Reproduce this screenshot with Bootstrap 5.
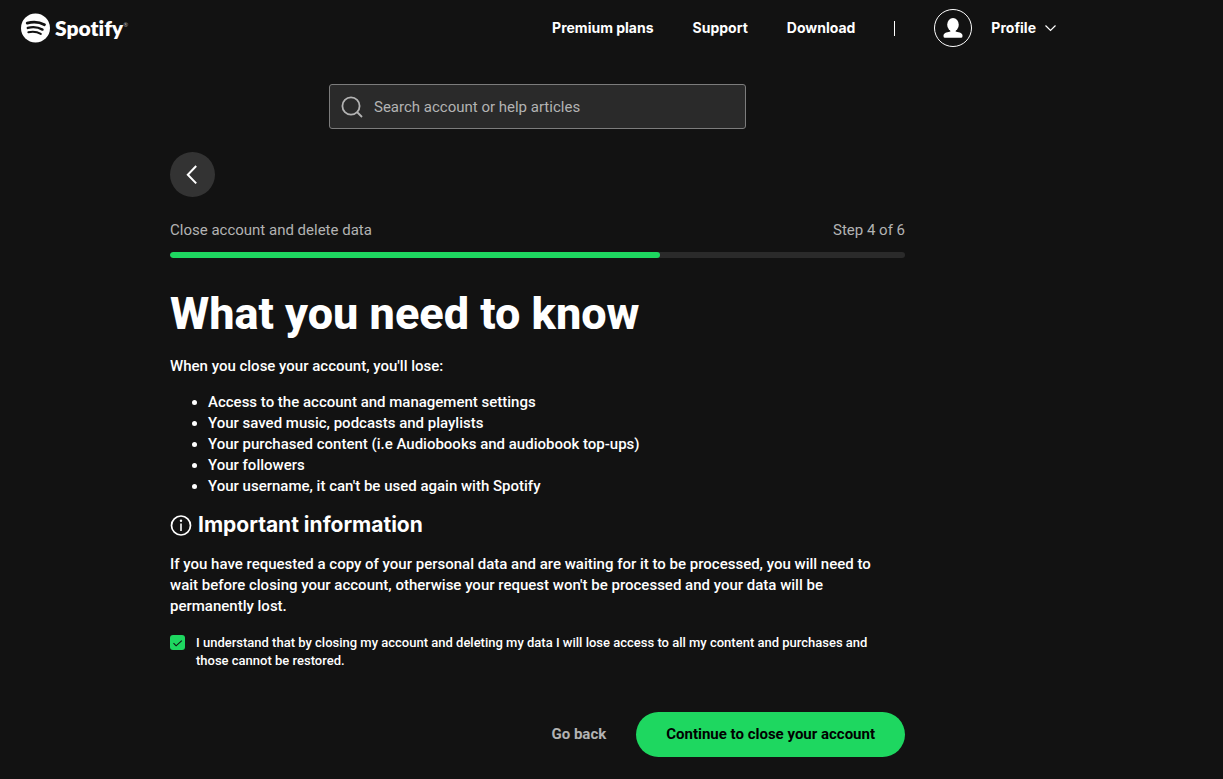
<!DOCTYPE html>
<html lang="en">
<head>
<meta charset="utf-8">
<meta name="viewport" content="width=device-width, initial-scale=1">
<title>Close account - Spotify</title>
<link href="https://cdn.jsdelivr.net/npm/bootstrap@5.3.0/dist/css/bootstrap.min.css" rel="stylesheet">
<style>
  :root { --green: #1ed760; --muted: #b3b3b3; }
  body { background: #121212; color: #fff; font-family: Roboto, "Liberation Sans", sans-serif; font-size: 15px; line-height: 21px; font-weight: 500; }
  .page-shell { padding-right: 148px; }
  .site-header { height: 56px; padding-left: 20px; padding-right: 19px; }
  .brand { color: #fff; font-family: Lato, sans-serif; font-variant-ligatures: none; font-size: 21px; line-height: 28px; font-weight: 800; text-decoration: none; gap: 5px; }
  .brand sup { font-size: 6px; color: var(--muted); top: -9px; font-weight: 400; }
  .top-link { color: #fff; font-family: Inter, sans-serif; font-weight: 700; font-size: 14px; line-height: 20px; text-decoration: none; }
  .top-link:hover { color: #fff; }
  .top-nav { gap: 39px; }
  .divider { width: 1px; height: 15px; background: #fff; }
  .avatar { width: 38px; height: 38px; border: 1px solid #fff; }
  .profile-btn { gap: 19px; }
  .search-box { width: 417px; max-width: 100%; height: 45px; margin-top: 28px; background: #2a2a2a; border: 1px solid #7c7c7c; border-radius: 3px; padding: 0 11px; gap: 11px; }
  .search-box input { background: transparent; border: 0; outline: 0; color: #fff; font-weight: 400; padding: 2px 0 0; }
  .search-box input::placeholder { color: var(--muted); opacity: 1; }
  .content { max-width: 735px; }
  .back-btn { width: 45px; height: 45px; background: #333; border: 0; color: #fff; margin-top: 23px; }
  .step-row { color: var(--muted); font-weight: 400; margin-top: 23px; }
  .progress { --bs-progress-height: 6px; --bs-progress-bg: #2a2a2a; --bs-progress-bar-bg: var(--green); --bs-progress-border-radius: 3px; margin-top: 11px; }
  .progress-bar { border-radius: 3px; }
  h1 { font-size: 45px; line-height: 54px; font-weight: 800; margin: 29px 0 15px; }
  .lose-list { padding-left: 38px; margin: 15px 0 14px; }
  h2 { font-family: Inter, sans-serif; font-size: 21px; line-height: 28px; font-weight: 700; gap: 6px; margin: 0 0 15px; }
  .notice { padding-right: 16px; margin: 0; }
  .consent { font-size: 13px; line-height: 18px; gap: 11px; margin-top: 17px; padding-right: 16px; }
  .consent input { width: 15px; height: 15px; appearance: none; border-radius: 3px; border: 1px solid #7c7c7c; margin-top: 1px; }
  .consent input:checked { border: 0; background: var(--green) url("data:image/svg+xml,%3Csvg xmlns='http://www.w3.org/2000/svg' viewBox='0 0 15 15'%3E%3Cpath d='M3.5 8.2l2.600 2.600 5.700-5.200' fill='none' stroke='%23121212' stroke-width='1.100'/%3E%3C/svg%3E"); }
  .actions { margin-top: 42px; padding-bottom: 22px; gap: 30px; }
  .actions button { font-weight: 700; border: 0; }
  .go-back { background: none; color: var(--muted); padding: 0; }
  .continue { background: var(--green); color: #000; height: 45px; padding: 0 30px; }
</style>
</head>
<body>
<div class="page-shell">
  <header class="site-header d-flex align-items-center justify-content-between">
    <a class="brand d-flex align-items-center" href="#">
      <svg width="30" height="30" viewBox="0 0 30 30" aria-hidden="true">
        <circle cx="15.500" cy="15" r="14.500" fill="#fff"/>
        <g fill="none" stroke="#121212" stroke-linecap="round">
          <path d="M7.200 10.100c5.800-1.700 12.500-1 17.300 1.600" stroke-width="2.800"/>
          <path d="M7.800 14.900c5.100-1.400 10.500-.7 14.700 1.700" stroke-width="2.400"/>
          <path d="M8.300 19.300c4.400-1 8.900-.5 12.500 1.600" stroke-width="1.900"/>
        </g>
      </svg>
      <span>Spotify<sup>®</sup></span>
    </a>
    <nav class="top-nav d-flex align-items-center">
      <a class="top-link" href="#">Premium plans</a>
      <a class="top-link" href="#">Support</a>
      <a class="top-link" href="#">Download</a>
      <span class="divider"></span>
      <button class="profile-btn top-link btn p-0 border-0 d-flex align-items-center" type="button">
        <span class="avatar rounded-circle d-flex align-items-center justify-content-center">
          <svg width="20" height="20" viewBox="0 0 20 20" fill="#fff" aria-hidden="true"><ellipse cx="10" cy="6.700" rx="5.800" ry="6.700"/><path d="M7.500 11h5v2.200c2 1.200 7 1 7 4.300v.8q0 1.500-1.500 1.500H2q-1.500 0-1.500-1.500v-.8c0-3.300 5-3.100 7-4.300z"/></svg>
        </span>
        <span class="d-flex align-items-center gap-2">Profile
          <svg width="12" height="8" viewBox="0 0 12 8" fill="none" stroke="#fff" stroke-width="1.200" aria-hidden="true"><path d="M1.500 1.500L6.500 6.500 11.500 1.500"/></svg>
        </span>
      </button>
    </nav>
  </header>

  <label class="search-box d-flex align-items-center mx-auto">
    <svg width="22" height="22" viewBox="0 0 22 22" fill="none" stroke="#b3b3b3" stroke-width="1.800" aria-hidden="true"><circle cx="10" cy="10" r="8.600"/><path d="M16 16l5 5"/></svg>
    <input class="flex-grow-1" type="search" aria-label="Search" placeholder="Search account or help articles">
  </label>

  <main class="content mx-auto">
    <button class="back-btn rounded-circle d-flex align-items-center justify-content-center p-0" type="button" aria-label="Back">
      <svg width="20" height="20" viewBox="0 0 20 20" fill="none" stroke="#fff" stroke-width="2" aria-hidden="true"><path d="M13.200 1L4.800 9.700l8.400 8.700"/></svg>
    </button>
    <div class="step-row d-flex justify-content-between"><span>Close account and delete data</span><span>Step 4 of 6</span></div>
    <div class="progress" role="progressbar" aria-label="Step 4 of 6" aria-valuenow="4" aria-valuemin="0" aria-valuemax="6"><div class="progress-bar" style="width:66.67%"></div></div>

    <h1>What you need to know</h1>
    <p class="mb-0">When you close your account, you'll lose:</p>
    <ul class="lose-list">
      <li>Access to the account and management settings</li>
      <li>Your saved music, podcasts and playlists</li>
      <li>Your purchased content (i.e Audiobooks and audiobook top-ups)</li>
      <li>Your followers</li>
      <li>Your username, it can't be used again with Spotify</li>
    </ul>
    <h2 class="d-flex align-items-center">
      <svg width="22" height="22" viewBox="0 0 22 22" fill="none" stroke="#fff" aria-hidden="true"><circle cx="11" cy="11.500" r="9.500" stroke-width="1.700"/><path d="M11 9.500v7.500" stroke-width="1.600"/><circle cx="11" cy="6.800" r="1.200" fill="#fff" stroke="none"/></svg>
      Important information
    </h2>
    <p class="notice">If you have requested a copy of your personal data and are waiting for it to be processed, you will need to wait before closing your account, otherwise your request won't be processed and your data will be permanently lost.</p>
    <label class="consent d-flex align-items-start">
      <input class="flex-shrink-0" type="checkbox" checked>
      <span>I understand that by closing my account and deleting my data I will lose access to all my content and purchases and those cannot be restored.</span>
    </label>
    <div class="actions d-flex justify-content-end align-items-center">
      <button class="go-back" type="button">Go back</button>
      <button class="continue rounded-pill" type="button">Continue to close your account</button>
    </div>
  </main>
</div>
<script src="https://cdn.jsdelivr.net/npm/bootstrap@5.3.0/dist/js/bootstrap.bundle.min.js"></script>
</body>
</html>
